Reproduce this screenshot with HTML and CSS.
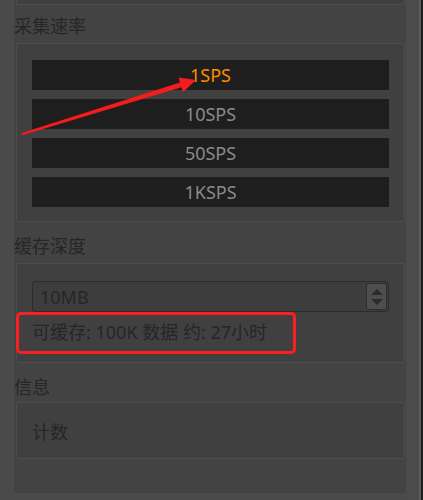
FILE: index.html
```html
<!DOCTYPE html>
<html lang="zh">
<head>
<meta charset="utf-8">
<link rel="stylesheet" href="styles.css">
</head>
<body>
<div class="window">
  <div class="gutter-left"></div>
  <div class="panel">
    <div class="group group-top"></div>
    <div class="title t1">采集速率</div>
    <div class="group g1">
      <div class="btn active">1SPS</div>
      <div class="btn">10SPS</div>
      <div class="btn">50SPS</div>
      <div class="btn">1KSPS</div>
    </div>
    <div class="title t2">缓存深度</div>
    <div class="group g2">
      <div class="spin">
        <span class="spin-value">10MB</span>
        <span class="spin-btns">
          <span class="tri up"></span>
          <span class="tri down"></span>
        </span>
      </div>
      <div class="info">可缓存: 100K 数据 约: 27小时</div>
    </div>
    <div class="title t3">信息</div>
    <div class="group g3">
      <div class="count">计数</div>
    </div>
  </div>
  <div class="gutter-right"></div>
  <div class="edge-light"></div>
  <div class="edge-dark"></div>
</div>
<div class="mark-box"></div>
<svg class="mark-arrow" width="423" height="500" viewBox="0 0 423 500">
  <polygon points="21.7,133 180,82.4 178.6,77.6 196,80 183.2,92 181.4,87.2 22.3,135.2" fill="#f41c1c"/>
</svg>
</body>
</html>
```
FILE: styles.css
```css
* { box-sizing: border-box; }
html, body { margin: 0; padding: 0; }
body {
  width: 423px;
  height: 500px;
  background: #4a4a4a;
  position: relative;
  overflow: hidden;
  font-family: "Noto Sans", "Noto Sans CJK SC", sans-serif;
  font-size: 18px;
}
.window {
  display: flex;
  height: 500px;
}
.gutter-left { width: 14px; background: #4a4a4a; }
.panel {
  width: 392px;
  height: 493px;
  background: #434343;
  display: flex;
  flex-direction: column;
}
.gutter-right { width: 13px; background: #4b4b4b; }
.edge-light { width: 2px; background: #5b5b5b; }
.edge-dark { width: 2px; background: #1d1d1d; }

.group {
  margin-left: 2px;
  width: 389px;
  background: #404040;
  border: 1px solid #4d4d4d;
  border-radius: 2px;
}
.group-top {
  height: 5px;
  border-top: none;
  border-radius: 0 0 2px 2px;
}
.title {
  color: #262626;
  line-height: 24px;
  white-space: nowrap;
}
.t1 { height: 38px; padding-top: 9px; }
.t2 { height: 41px; padding-top: 12px; }
.t3 { height: 39px; padding-top: 12px; }

.g1 {
  height: 179px;
  padding: 16px 15px 0 15px;
  display: flex;
  flex-direction: column;
  gap: 9px;
}
.btn {
  height: 30px;
  background: #1e1e1e;
  color: #8a8a8a;
  text-align: center;
  line-height: 30px;
}
.btn.active { color: #ff8a00; }

.g2 {
  height: 100px;
  padding: 17px 15px 0 15px;
}
.spin {
  height: 31px;
  border: 1px solid #2c2c2c;
  border-radius: 3px;
  background: #3d3d3d;
  display: flex;
  align-items: center;
  justify-content: space-between;
  padding: 0 1px 0 7px;
}
.spin-value { color: #262626; line-height: 24px; }
.spin-btns {
  width: 21px;
  height: 27px;
  background: #4e4e4e;
  border: 1px solid #2e2e2e;
  border-radius: 3px;
  display: flex;
  flex-direction: column;
  align-items: center;
  justify-content: center;
  gap: 4px;
}
.tri {
  width: 0;
  height: 0;
  border-left: 6px solid transparent;
  border-right: 6px solid transparent;
}
.tri.up { border-bottom: 6px solid #2b2b2b; }
.tri.down { border-top: 6px solid #2b2b2b; }
.info {
  margin-top: 8px;
  line-height: 24px;
  color: #262626;
  white-space: nowrap;
}

.g3 {
  height: 57px;
  padding: 17px 15px 0 15px;
}
.count { color: #262626; line-height: 24px; }

.mark-box {
  position: absolute;
  left: 16px;
  top: 312px;
  width: 280px;
  height: 42px;
  border: 3px solid #fb1f1f;
  border-radius: 5px;
}
.mark-arrow {
  position: absolute;
  left: 0;
  top: 0;
  pointer-events: none;
}
```
